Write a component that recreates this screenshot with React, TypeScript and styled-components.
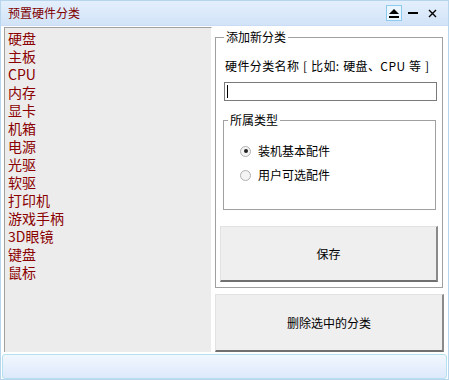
import styled, { createGlobalStyle } from 'styled-components';

const GlobalStyle = createGlobalStyle`
  html, body {
    margin: 0;
    padding: 0;
    background: #ffffff;
  }
  * {
    box-sizing: border-box;
  }
`;

const Window = styled.div`
  width: 449px;
  height: 380px;
  display: flex;
  flex-direction: column;
  background: #ffffff;
  border: 1px solid #b7d6ee;
  font-family: 'Noto Sans CJK SC', 'Liberation Sans', sans-serif;
`;

const TitleBar = styled.div`
  height: 25px;
  display: flex;
  align-items: center;
  padding: 0 8px 0 7px;
  background: linear-gradient(#e4effc, #d2e3f8);
  border-bottom: 1px solid #c8dcf3;
`;

const Title = styled.div`
  flex: 1;
  font-size: 12px;
  color: #800000;
  line-height: 16px;
`;

const TitleButtons = styled.div`
  display: flex;
  align-items: center;
  gap: 3px;
`;

const TitleButton = styled.div<{ $active?: boolean }>`
  width: 16px;
  height: 16px;
  display: flex;
  align-items: center;
  justify-content: center;
  border: 1px solid ${(p) => (p.$active ? '#8ccbee' : 'transparent')};
  background: ${(p) => (p.$active ? '#eaf5fd' : 'transparent')};
`;

const Body = styled.div`
  flex: 1;
  display: flex;
  padding: 1px 4px 0 3px;
  gap: 3px;
`;

const CategoryList = styled.ul`
  width: 210px;
  margin: 0 0 1px 0;
  padding: 1px 0 0 3px;
  list-style: none;
  background: #ececec;
  border-top: 1px solid #a0a0a0;
  border-left: 1px solid #a0a0a0;
  border-right: 1px solid #ffffff;
`;

const CategoryItem = styled.li`
  height: 18px;
  display: flex;
  align-items: center;
  overflow: hidden;
  font-size: 14px;
  line-height: 14px;
  color: #8b0000;
  font-family: 'Noto Sans CJK SC', sans-serif;
`;

const RightColumn = styled.div`
  width: 229px;
  display: flex;
  flex-direction: column;
  padding-top: 2px;
`;

const GroupBox = styled.fieldset<{ $inner?: boolean }>`
  margin: ${(p) => (p.$inner ? '11px 0 0 3px' : '0 1px 0 0')};
  width: ${(p) => (p.$inner ? '213px' : '228px')};
  height: ${(p) => (p.$inner ? '98px' : '259px')};
  padding: ${(p) => (p.$inner ? '0' : '0 4px')};
  border: 1px solid #a0a0a0;
  min-width: 0;
  display: flex;
  flex-direction: column;
`;

const Legend = styled.legend`
  font-size: 12px;
  line-height: 16px;
  margin-left: 4px;
  padding: 0 2px;
  color: #000;
`;

const FieldLabel = styled.div`
  margin: 13px 0 0 5px;
  font-size: 12px;
  line-height: 16px;
  color: #000;
  white-space: nowrap;
  letter-spacing: 0.4px;
  word-spacing: 0.5px;
`;

const TextInput = styled.div`
  margin: 8px 0 0 4px;
  width: 213px;
  height: 19px;
  border: 1px solid #7a7a7a;
  background: #fff;
  padding: 2px 0 0 2px;
`;

const Caret = styled.div`
  width: 1px;
  height: 13px;
  background: #000;
`;

const RadioGroup = styled.div`
  display: flex;
  flex-direction: column;
  gap: 8px;
  padding: 15px 0 0 16px;
`;

const RadioRow = styled.label`
  display: flex;
  align-items: center;
  gap: 7px;
  font-size: 12px;
  line-height: 16px;
  color: #000;
`;

const RadioDot = styled.span<{ $checked?: boolean }>`
  width: 11px;
  height: 11px;
  border-radius: 50%;
  border: 1px solid #b0b0b0;
  background: #f4f4f4;
  display: flex;
  align-items: center;
  justify-content: center;
  &::after {
    content: '';
    width: 4px;
    height: 4px;
    border-radius: 50%;
    background: ${(p) => (p.$checked ? '#222' : 'transparent')};
  }
`;

const PushButton = styled.button<{ $wide?: boolean }>`
  margin-top: ${(p) => (p.$wide ? '6px' : '16px')};
  width: ${(p) => (p.$wide ? '229px' : '218px')};
  height: ${(p) => (p.$wide ? '58px' : '56px')};
  background: #efefef;
  border-top: 1px solid #e2e2e2;
  border-left: 1px solid #e2e2e2;
  border-right: 2px solid #8a8a8a;
  border-bottom: 2px solid #707070;
  font-family: 'Noto Sans CJK SC', sans-serif;
  font-size: 12px;
  color: #000;
  padding: 0;
`;

const StatusBar = styled.div`
  height: 25px;
  margin: 1px 1px 0 1px;
  border: 1px solid #b3e1ef;
  border-radius: 3px;
  background: linear-gradient(#f1f7fe, #dde9fb);
`;

const categories = [
  '硬盘',
  '主板',
  'CPU',
  '内存',
  '显卡',
  '机箱',
  '电源',
  '光驱',
  '软驱',
  '打印机',
  '游戏手柄',
  '3D眼镜',
  '键盘',
  '鼠标',
];

export default function App() {
  return (
    <>
      <GlobalStyle />
      <Window>
        <TitleBar>
          <Title>预置硬件分类</Title>
          <TitleButtons>
            <TitleButton $active>
              <svg width="10" height="9" viewBox="0 0 10 9">
                <path d="M5 0 L10 5 L0 5 Z" fill="#000" />
                <rect x="0" y="7" width="10" height="2" fill="#000" />
              </svg>
            </TitleButton>
            <TitleButton>
              <svg width="10" height="2" viewBox="0 0 10 2">
                <rect x="0" y="0" width="10" height="2" fill="#000" />
              </svg>
            </TitleButton>
            <TitleButton>
              <svg width="9" height="9" viewBox="0 0 9 9">
                <path d="M1 1 L8 8 M8 1 L1 8" stroke="#000" strokeWidth="1.4" />
              </svg>
            </TitleButton>
          </TitleButtons>
        </TitleBar>
        <Body>
          <CategoryList>
            {categories.map((c) => (
              <CategoryItem key={c}>{c}</CategoryItem>
            ))}
          </CategoryList>
          <RightColumn>
            <GroupBox>
              <Legend>添加新分类</Legend>
              <FieldLabel>硬件分类名称 [ 比如: 硬盘、CPU 等 ]</FieldLabel>
              <TextInput>
                <Caret />
              </TextInput>
              <GroupBox $inner>
                <Legend>所属类型</Legend>
                <RadioGroup>
                  <RadioRow>
                    <RadioDot $checked />
                    装机基本配件
                  </RadioRow>
                  <RadioRow>
                    <RadioDot />
                    用户可选配件
                  </RadioRow>
                </RadioGroup>
              </GroupBox>
              <PushButton>保存</PushButton>
            </GroupBox>
            <PushButton $wide>删除选中的分类</PushButton>
          </RightColumn>
        </Body>
        <StatusBar />
      </Window>
    </>
  );
}
